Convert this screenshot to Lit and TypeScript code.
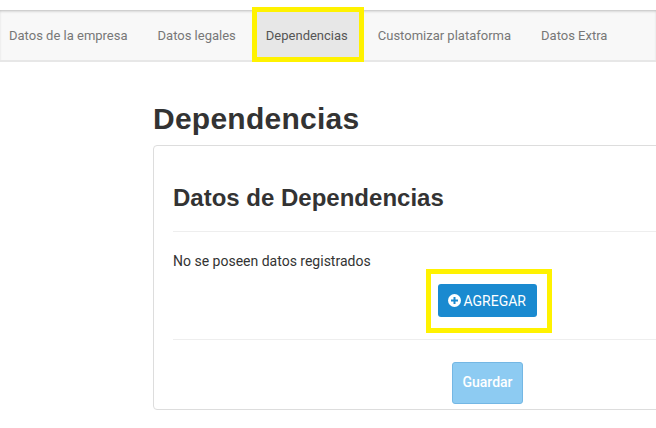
import { LitElement, html, css } from "lit";
import { customElement } from "lit/decorators.js";

@customElement("app-root")
export class AppRoot extends LitElement {
  static styles = css`
    :host { display: block; position: relative; width: 656px; height: 428px; overflow: hidden; background: #fff; font-family: Roboto, sans-serif; color: #333; }
    nav { margin-top: 10px; height: 50px; display: flex; align-items: stretch; background: #f8f8f8; border-bottom: 2px solid #e7e7e7; box-shadow: inset 0 2px 3px -1px rgba(0,0,0,.25); padding-left: 9px; box-sizing: content-box; }
    .tab { display: flex; align-items: center; font-size: 13px; color: #777; margin-right: 30px; white-space: nowrap; }
    .tab.active { background: #e7e7e7; color: #555; margin: 0 16px 0 -14px; padding: 0 14px; }
    main { padding: 37px 0 0 153px; width: 640px; box-sizing: border-box; }
    h1 { margin: 0; font: bold 30px/40px "Liberation Sans", sans-serif; letter-spacing: .25px; color: #333; }
    .card { margin-top: 6px; width: 600px; height: 265px; box-sizing: border-box; border: 1px solid #ddd; border-radius: 4px; padding: 0 19px; }
    h2 { margin: 0; padding: 38px 0 19px; font: bold 24px/28px "Liberation Sans", sans-serif; color: #333; border-bottom: 1px solid #eee; }
    p { margin: 21px 0 0; font-size: 14px; line-height: 17px; color: #333; }
    .add-row, .save-row { display: flex; }
    .add-row { padding: 14px 0 22px 265px; border-bottom: 1px solid #eee; }
    .btn { display: flex; align-items: center; justify-content: center; box-sizing: border-box; font-size: 14px; color: #fff; border-radius: 3px; }
    .add { width: 99px; height: 33px; background: #1a8ad0; gap: 2.5px; padding-right: 1px; }
    .save-row { padding: 22px 0 0 279px; }
    .save { width: 71px; height: 42px; background: #8dcbf2; border: 1px solid #74b7e4; font-weight: 500; padding-bottom: 2px; }
    .mark { position: absolute; border: 5px solid #fff200; box-sizing: border-box; }
    .m1 { left: 252px; top: 7px; width: 112px; height: 55px; }
    .m2 { left: 426px; top: 269px; width: 126px; height: 64px; }
  `;
  render() {
    return html`
      <nav>
        <div class="tab">Datos de la empresa</div>
        <div class="tab">Datos legales</div>
        <div class="tab active">Dependencias</div>
        <div class="tab">Customizar plataforma</div>
        <div class="tab">Datos Extra</div>
      </nav>
      <main>
        <h1>Dependencias</h1>
        <section class="card">
          <h2>Datos de Dependencias</h2>
          <p>No se poseen datos registrados</p>
          <div class="add-row">
            <div class="btn add">
              <svg width="13" height="13" viewBox="0 0 13 13"><circle cx="6.5" cy="6.5" r="6.5" fill="#fff"/><path d="M3 6.5h7M6.5 3v7" stroke="#1a8ad0" stroke-width="2"/></svg>
              <span>AGREGAR</span>
            </div>
          </div>
          <div class="save-row"><div class="btn save">Guardar</div></div>
        </section>
      </main>
      <div class="mark m1"></div>
      <div class="mark m2"></div>
    `;
  }
}
